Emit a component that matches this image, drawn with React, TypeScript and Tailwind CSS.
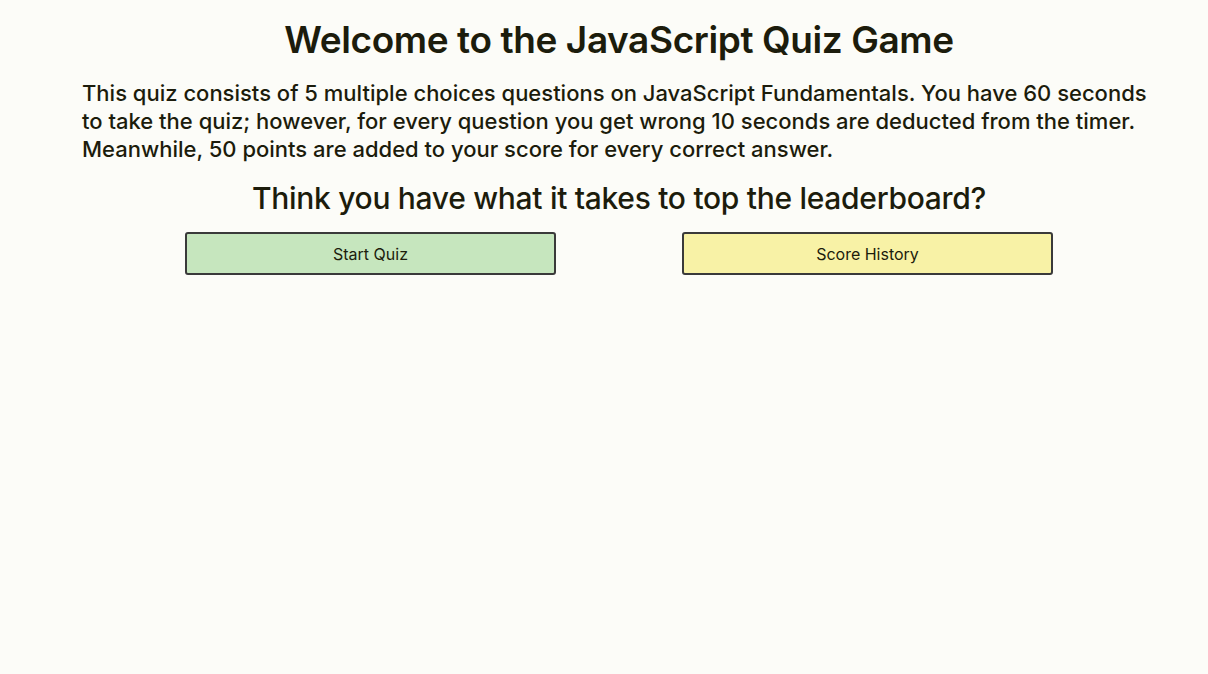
import React from 'react';

export default function App() {
  return (
    <div className="min-h-[674px] bg-[#fcfcf8] text-[#1c1c0c]" style={{ fontFamily: 'Inter, "Liberation Sans", sans-serif' }}>
      <div className="pl-[82px] pr-[52px] pt-[14px] flex flex-col items-center">
        <h1 className="text-[37px] leading-[52px] font-semibold tracking-[-0.4px]">Welcome to the JavaScript Quiz Game</h1>
        <p className="mt-[13px] text-[22px] leading-[28px] font-medium self-stretch">
          This quiz consists of 5 multiple choices questions on JavaScript Fundamentals. You have 60 seconds to take the quiz; however, for every question you get wrong 10 seconds are deducted from the timer. Meanwhile, 50 points are added to your score for every correct answer.
        </p>
        <h2 className="mt-[17px] text-[30px] leading-[36px] font-medium tracking-[-0.3px]">Think you have what it takes to top the leaderboard?</h2>
        <div className="mt-[16px] flex justify-center gap-[126px] w-full">
          <button className="w-[371px] h-[43px] rounded-[3px] border-2 border-[#3a3a3a] bg-[#c6e6be] text-[16px]">Start Quiz</button>
          <button className="w-[371px] h-[43px] rounded-[3px] border-2 border-[#3a3a3a] bg-[#f8f2a6] text-[16px]">Score History</button>
        </div>
      </div>
    </div>
  );
}
